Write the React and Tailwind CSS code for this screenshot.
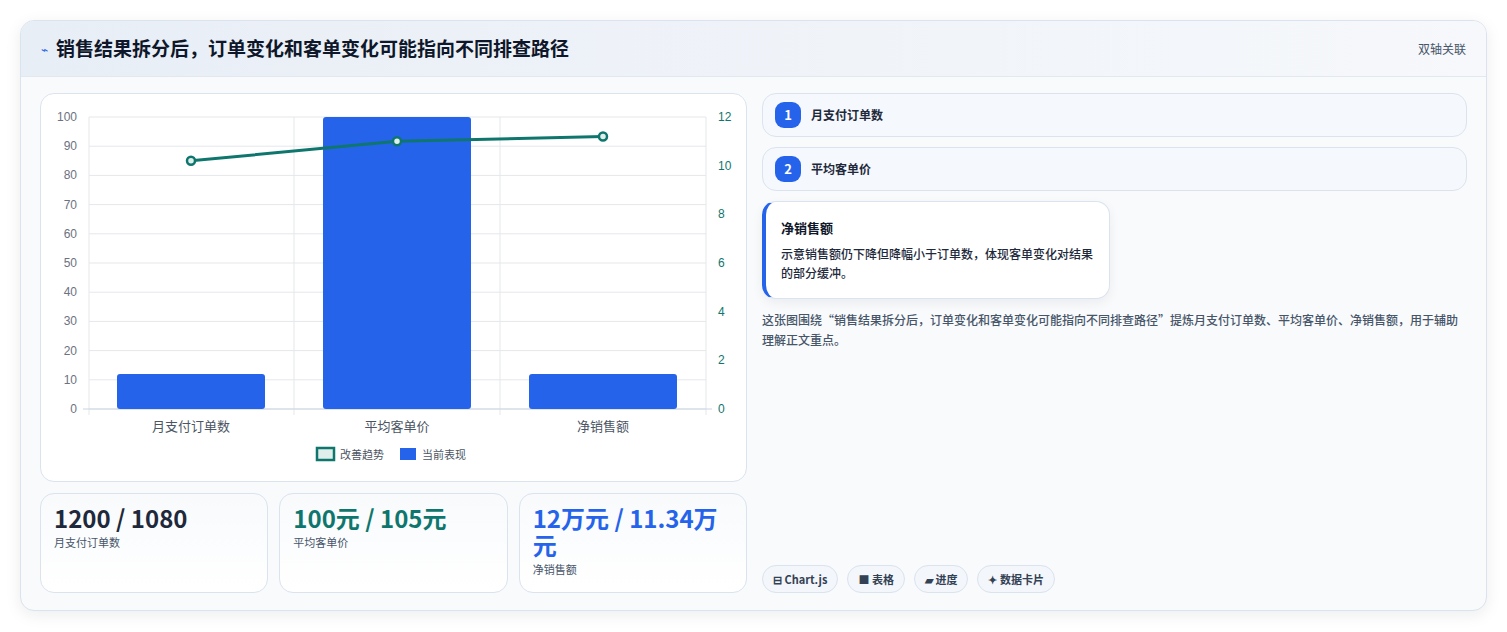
export default function App() {
  const f = { fontFamily: '"Noto Sans CJK SC", "Noto Sans", sans-serif' };
  const X0 = 48, X1 = 665, Y0 = 23, Y1 = 315;
  const yl = v => Y1 - (v / 100) * (Y1 - Y0);
  const yr = v => Y1 - (v / 12) * (Y1 - Y0);
  const cats = ['月支付订单数', '平均客单价', '净销售额'];
  const cx = [150, 356, 562];
  const bars = [12, 100, 12];
  const line = [10.2, 11, 11.2];
  return (
    <div style={f} className="w-[1507px] h-[632px] bg-white pt-[20px] px-[20px] overflow-hidden">
      <div className="w-[1467px] h-[591px] rounded-[14px] border border-[#dbe3ee] bg-[#f8fafc] shadow-[0_4px_16px_rgba(15,23,42,0.08)] overflow-hidden flex flex-col">
        <div className="h-[56px] shrink-0 flex items-center justify-between px-[20px] bg-gradient-to-r from-[#e8eef6] to-[#f6f8fb] border-b border-[#e2e8f0]">
          <div className="flex items-center gap-[8px]">
            <span className="text-[#2563eb] text-[12px]">⌁</span>
            <span className="text-[19px] font-bold text-[#0f172a]">销售结果拆分后，订单变化和客单变化可能指向不同排查路径</span>
          </div>
          <span className="text-[12px] text-[#475569]">双轴关联</span>
        </div>
        <div className="flex gap-[15px] px-[19px] pt-[16px]">
          <div className="w-[707px] flex flex-col gap-[11px]">
            <div className="h-[389px] rounded-[14px] border border-[#dbe3ee] bg-white relative">
              <svg width="706" height="389" className="absolute left-0 top-0">
                {[0,10,20,30,40,50,60,70,80,90,100].map(v => (
                  <g key={v}>
                    <line x1={X0} x2={X1} y1={yl(v)} y2={yl(v)} stroke="#e5e7eb" />
                    <text x={X0 - 12} y={yl(v) + 4} textAnchor="end" fontSize="12" fill="#6b7280" fontFamily="Liberation Sans, sans-serif">{v}</text>
                  </g>
                ))}
                {[0,2,4,6,8,10,12].map(v => (
                  <text key={v} x={X1 + 12} y={yr(v) + 4} fontSize="12" fill="#0f766e" fontFamily="Liberation Sans, sans-serif">{v}</text>
                ))}
                {[X0, 253, 459, X1].map(x => <line key={x} x1={x} x2={x} y1={Y0} y2={Y1 + 6} stroke="#e5e7eb" />)}
                <line x1={X0 - 6} x2={X1 + 6} y1={Y1} y2={Y1} stroke="#cbd5e1" />
                {bars.map((b, i) => (
                  <rect key={i} x={cx[i] - 74} y={yl(b)} width="148" height={Y1 - yl(b)} rx="3" fill="#2563eb" />
                ))}
                <polyline points={cx.map((x, i) => `${x},${yr(line[i])}`).join(' ')} fill="none" stroke="#0f766e" strokeWidth="3" />
                {cx.map((x, i) => <circle key={i} cx={x} cy={yr(line[i])} r="4" fill="#dff0ec" stroke="#0f766e" strokeWidth="2.5" />)}
                {cats.map((c, i) => (
                  <text key={c} x={cx[i]} y={337} textAnchor="middle" fontSize="13" fill="#4b5563">{c}</text>
                ))}
                <rect x="276" y="354" width="17" height="12" fill="#e0efec" stroke="#0f766e" strokeWidth="2.5" />
                <text x="299" y="365" fontSize="11" fill="#4b5563">改善趋势</text>
                <rect x="359" y="354" width="16" height="12" fill="#2563eb" />
                <text x="381" y="365" fontSize="11" fill="#4b5563">当前表现</text>
              </svg>
            </div>
            <div className="grid grid-cols-3 gap-[11px]">
              {[
                ['1200 / 1080', '月支付订单数', 'text-[#1e293b]'],
                ['100元 / 105元', '平均客单价', 'text-[#0f766e]'],
                ['12万元 / 11.34万元', '净销售额', 'text-[#2563eb]'],
              ].map(([v, l, c]) => (
                <div key={l} className="h-[100px] rounded-[14px] border border-[#dbe3ee] bg-gradient-to-b from-[#f8fafc] to-white px-[13px] pt-[10px]">
                  <div className={`text-[24px] leading-[27px] font-bold ${c}`}>{v}</div>
                  <div className="text-[11px] text-[#475569] mt-[3px]">{l}</div>
                </div>
              ))}
            </div>
          </div>
          <div className="flex-1 flex flex-col h-[500px]">
            {['月支付订单数', '平均客单价'].map((t, i) => (
              <div key={t} className="h-[44px] mb-[10px] rounded-[14px] border border-[#dbe3ee] bg-[#f5f8fc] flex items-center px-[12px] gap-[10px]">
                <span className="w-[26px] h-[26px] rounded-[9px] bg-[#2563eb] text-white text-[13px] font-bold flex items-center justify-center">{i + 1}</span>
                <span className="text-[12px] font-semibold text-[#1e293b]">{t}</span>
              </div>
            ))}
            <div className="w-[348px] h-[98px] rounded-[14px] border border-[#dbe3ee] border-l-[4px] border-l-[#2563eb] bg-white shadow-[0_4px_12px_rgba(15,23,42,0.06)] px-[15px] pt-[16px]">
              <div className="text-[13px] font-bold text-[#0f172a]">净销售额</div>
              <div className="text-[12px] leading-[19px] text-[#1e293b] mt-[6px] font-medium">示意销售额仍下降但降幅小于订单数，体现客单变化对结果的部分缓冲。</div>
            </div>
            <div className="text-[12px] leading-[20px] text-[#475569] mt-[11px] font-medium">这张图围绕“销售结果拆分后，订单变化和客单变化可能指向不同排查路径”提炼月支付订单数、平均客单价、净销售额，用于辅助理解正文重点。</div>
            <div className="flex-1" />
            <div className="flex gap-[9px]">
              {['⊟ Chart.js', '■ 表格', '▰ 进度', '✦ 数据卡片'].map(t => (
                <span key={t} className="h-[28px] px-[10px] rounded-full border border-[#dbe3ee] bg-[#f3f6fa] text-[11px] font-bold text-[#334155] flex items-center">{t}</span>
              ))}
            </div>
          </div>
        </div>
      </div>
    </div>
  );
}
